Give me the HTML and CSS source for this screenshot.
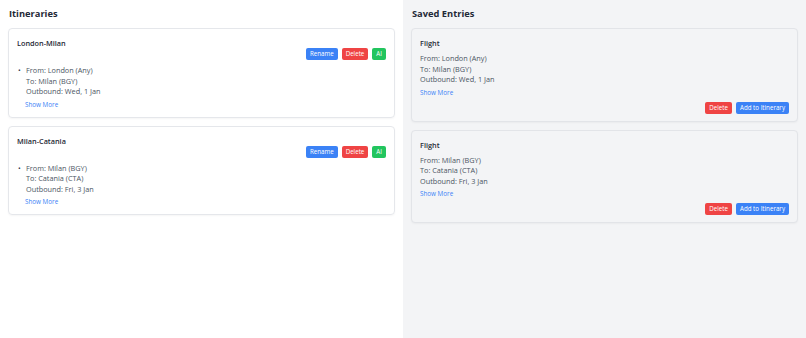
FILE: index.html
```html
<!DOCTYPE html>
<html>
<head>
<meta charset="utf-8">
<link rel="stylesheet" href="styles.css">
</head>
<body>
<div class="layout">
  <section class="panel panel-left">
    <h2 class="panel-title">Itineraries</h2>
    <div class="card">
      <div class="card-title">London-Milan</div>
      <div class="actions">
        <button class="btn btn-blue">Rename</button>
        <button class="btn btn-red">Delete</button>
        <button class="btn btn-green">AI</button>
      </div>
      <ul class="entries">
        <li>From: London (Any)<br>To: Milan (BGY)<br>Outbound: Wed, 1 Jan</li>
      </ul>
      <a class="more">Show More</a>
    </div>
    <div class="card">
      <div class="card-title">Milan-Catania</div>
      <div class="actions">
        <button class="btn btn-blue">Rename</button>
        <button class="btn btn-red">Delete</button>
        <button class="btn btn-green">AI</button>
      </div>
      <ul class="entries">
        <li>From: Milan (BGY)<br>To: Catania (CTA)<br>Outbound: Fri, 3 Jan</li>
      </ul>
      <a class="more">Show More</a>
    </div>
  </section>
  <section class="panel panel-right">
    <h2 class="panel-title">Saved Entries</h2>
    <div class="card card-saved">
      <div class="card-title">Flight</div>
      <div class="details">From: London (Any)<br>To: Milan (BGY)<br>Outbound: Wed, 1 Jan</div>
      <a class="more">Show More</a>
      <div class="actions actions-bottom">
        <button class="btn btn-red">Delete</button>
        <button class="btn btn-blue">Add to Itinerary</button>
      </div>
    </div>
    <div class="card card-saved">
      <div class="card-title">Flight</div>
      <div class="details">From: Milan (BGY)<br>To: Catania (CTA)<br>Outbound: Fri, 3 Jan</div>
      <a class="more">Show More</a>
      <div class="actions actions-bottom">
        <button class="btn btn-red">Delete</button>
        <button class="btn btn-blue">Add to Itinerary</button>
      </div>
    </div>
  </section>
</div>
</body>
</html>
```

FILE: styles.css
```css
* { box-sizing: border-box; }
html, body { margin: 0; padding: 0; }
body {
  font-family: "Open Sans", "Noto Sans", sans-serif;
  color: #374151;
  width: 806px;
  height: 338px;
  overflow: hidden;
}
.layout {
  display: grid;
  grid-template-columns: 403px 403px;
  height: 338px;
}
.panel {
  padding: 8px;
  display: flex;
  flex-direction: column;
  gap: 8px;
}
.panel-left { background: #ffffff; }
.panel-right { background: #f3f4f6; }
.panel-title {
  margin: 0;
  font-size: 9.3px;
  line-height: 12px;
  font-weight: 700;
  color: #1f2937;
  padding-left: 1px;
}
.card {
  border: 1px solid #e5e7eb;
  border-radius: 4px;
  padding: 9px 8px 7px 8px;
  box-shadow: 0 1px 2px rgba(0,0,0,0.04);
  display: flex;
  flex-direction: column;
}
.card-saved {
  background: #f3f4f6;
  border-color: #e2e4e8;
}
.card-title {
  font-size: 7.3px;
  line-height: 10px;
  font-weight: 600;
  color: #1f2937;
}
.actions {
  display: flex;
  justify-content: flex-end;
  gap: 4px;
}
.btn {
  font-family: inherit;
  font-size: 6.2px;
  line-height: 12px;
  height: 12px;
  padding: 0 4px;
  border: none;
  border-radius: 2px;
  color: #ffffff;
}
.btn-blue { background: #3b82f6; }
.btn-red { background: #ef4444; }
.btn-green { background: #22c55e; }
.entries {
  list-style: none;
  margin: 5px 0 0 0;
  padding: 0;
  font-size: 7.3px;
  line-height: 10.5px;
  color: #4b5563;
}
.entries li {
  display: flex;
}
.entries li::before {
  content: "•";
  width: 8px;
  flex: none;
  padding-left: 1px;
  color: #374151;
}
.more {
  font-size: 6.3px;
  line-height: 10px;
  color: #3b82f6;
  margin-top: 3px;
  padding-left: 8px;
}
.details {
  margin-top: 5px;
  font-size: 7.3px;
  line-height: 10.5px;
  color: #4b5563;
}
.card-saved .more { padding-left: 0; }
.actions-bottom { margin-top: 4px; }
```
